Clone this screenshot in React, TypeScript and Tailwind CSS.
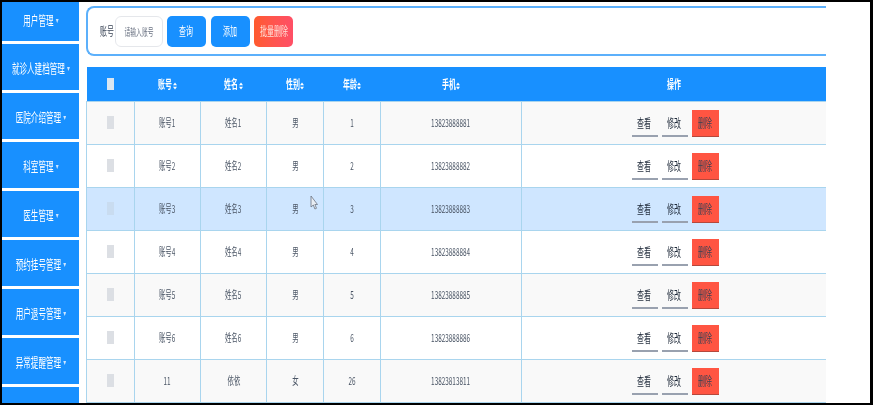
const menus = ['用户管理', '就诊人建档管理', '医院介绍管理', '科室管理', '医生管理', '预约挂号管理', '用户退号管理', '异常提醒管理'];

const rows = [
  { account: '账号1', name: '姓名1', gender: '男', age: '1', phone: '13823888881' },
  { account: '账号2', name: '姓名2', gender: '男', age: '2', phone: '13823888882' },
  { account: '账号3', name: '姓名3', gender: '男', age: '3', phone: '13823888883' },
  { account: '账号4', name: '姓名4', gender: '男', age: '4', phone: '13823888884' },
  { account: '账号5', name: '姓名5', gender: '男', age: '5', phone: '13823888885' },
  { account: '账号6', name: '姓名6', gender: '男', age: '6', phone: '13823888886' },
  { account: '11', name: '依依', gender: '女', age: '26', phone: '13823813811' },
];

const columns = ['账号', '姓名', '性别', '年龄'];

function Squeezed({ text, className }: { text: string; className?: string }) {
  return <span className={`inline-block shrink-0 origin-center scale-x-[0.58] whitespace-nowrap ${className ?? ''}`}>{text}</span>;
}

function SortCaret() {
  return (
    <svg width="4" height="8" viewBox="0 0 5 9" className="inline-block align-[-1px]" fill="currentColor">
      <path d="M2.5 0 5 3.6H0z" />
      <path d="M2.5 9 0 5.4h5z" />
    </svg>
  );
}

function RowActions() {
  return (
    <div className="flex items-center justify-center gap-[4px] pt-[2px] pl-[2px]">
      <button className="flex h-[27px] w-[26px] items-center justify-center border-b-2 border-gray-400 text-[12px] text-gray-800">
        <Squeezed text="查看" />
      </button>
      <button className="flex h-[27px] w-[26px] items-center justify-center border-b-2 border-gray-400 text-[12px] text-gray-800">
        <Squeezed text="修改" />
      </button>
      <button className="flex h-[27px] w-[27px] items-center justify-center border-b border-[#b5483c] bg-[#ff5542] text-[12px] text-gray-700">
        <Squeezed text="删除" />
      </button>
    </div>
  );
}

export default function App() {
  return (
    <div className="h-[405px] w-[873px] overflow-hidden border-y-2 border-r-[3px] border-l-2 border-black bg-white font-['Noto_Sans_CJK_SC','Liberation_Sans',sans-serif]">
      <div className="flex h-full blur-[0.5px]">
        {/* Side menu */}
        <aside className="flex w-[77px] shrink-0 flex-col gap-[3px] overflow-hidden">
          {menus.map((menu, i) => (
            <div
              key={menu}
              className={`flex shrink-0 items-center justify-center bg-[#1890ff] text-[13px] text-white ${i === 0 ? 'h-[39px] pb-[4px]' : 'h-[46px] pt-[2px]'}`}
            >
              <div className="flex w-[130px] shrink-0 scale-x-[0.58] items-center justify-center whitespace-nowrap">
                {menu}
                <span className="ml-[4px] text-[5px] text-[#cfe6ff]">▼</span>
              </div>
            </div>
          ))}
          <div className="h-[46px] shrink-0 bg-[#1890ff]" />
        </aside>

        <main className="relative min-w-0 flex-1 overflow-hidden pt-[4px] pl-[7px]">
          {/* Search bar */}
          <div className="flex h-[50px] w-[740px] items-center rounded-l-lg border-y-2 border-l-2 border-[#5cb0fb] pl-[13px]">
            <div className="flex w-[12px] justify-center text-[12px] text-gray-700">
              <Squeezed text="账号" />
            </div>
            <div className="ml-[2px] flex h-[31px] w-[48px] items-center justify-center rounded-md border border-gray-200 bg-white text-[10px] text-gray-500">
              <Squeezed text="请输入账号" />
            </div>
            <button className="ml-[4px] flex h-[31px] w-[39px] items-center justify-center rounded-[5px] bg-[#1890ff] text-[12px] text-white">
              <Squeezed text="查询" />
            </button>
            <button className="ml-[5px] flex h-[31px] w-[39px] items-center justify-center rounded-[5px] bg-[#1890ff] text-[12px] text-white">
              <Squeezed text="添加" />
            </button>
            <button className="ml-[4px] flex h-[31px] w-[39px] items-center justify-center rounded-[5px] bg-gradient-to-r from-[#ff5a2c] to-[#ff4f66] text-[12px] text-[#ffe0d8]">
              <Squeezed text="批量删除" />
            </button>
          </div>

          {/* Table */}
          <table className="mt-[11px] w-[740px] table-fixed border-collapse text-center text-[11px] text-gray-600">
            <thead>
              <tr className="h-[34px] bg-[#1890ff] text-[12px] font-bold text-white">
                <th className="w-[48px]">
                  <div className="mx-auto h-[12px] w-[7px] bg-[#d9e6f2]" />
                </th>
                {columns.map((col, i) => (
                  <th key={col} className={i < 2 ? 'w-[66px]' : 'w-[57px]'}>
                    <Squeezed text={col} className="-mx-[5px]" />
                    <SortCaret />
                  </th>
                ))}
                <th className="w-[141px]">
                  <Squeezed text="手机" className="-mx-[5px]" />
                  <SortCaret />
                </th>
                <th>
                  <Squeezed text="操作" />
                </th>
              </tr>
            </thead>
            <tbody>
              {rows.map((row, i) => (
                <tr key={row.account} className={`h-[43px] ${i === 2 ? 'bg-[#cfe6ff]' : i % 2 === 0 ? 'bg-[#f9f9f9]' : 'bg-white'}`}>
                  <td className="border border-[#a9d5ee]">
                    <div className={`mx-auto h-[13px] w-[7px] ${i === 2 ? 'bg-[#c9dcf0]' : 'bg-[#dcdfe4]'}`} />
                  </td>
                  <td className="border border-[#a9d5ee]"><Squeezed text={row.account} /></td>
                  <td className="border border-[#a9d5ee]"><Squeezed text={row.name} /></td>
                  <td className="border border-[#a9d5ee]"><Squeezed text={row.gender} /></td>
                  <td className="border border-[#a9d5ee]"><Squeezed text={row.age} /></td>
                  <td className="border border-[#a9d5ee]"><Squeezed text={row.phone} /></td>
                  <td className="border-y border-l border-[#a9d5ee]"><RowActions /></td>
                </tr>
              ))}
            </tbody>
          </table>

          {/* Mouse pointer caught in the capture */}
          <svg width="8" height="15" viewBox="0 0 8 15" className="absolute top-[193px] left-[231px]">
            <path d="M1 1v11l2.3-2 1.6 4 1.6-.7-1.6-3.8H7.5z" fill="#e8edf3" stroke="#6b7280" strokeWidth="0.8" />
          </svg>
        </main>
      </div>
    </div>
  );
}
